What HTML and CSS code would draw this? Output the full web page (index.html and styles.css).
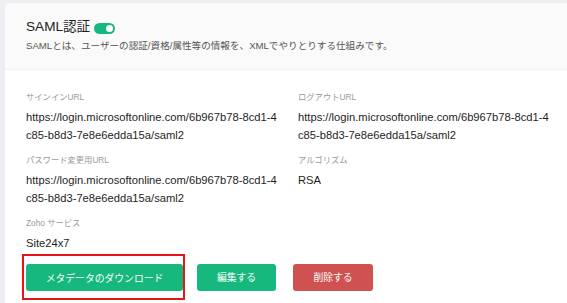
FILE: index.html
```html
<!DOCTYPE html>
<html lang="ja">
<head>
    <meta charset="UTF-8">
    <meta name="viewport" content="width=device-width, initial-scale=1.0">
    <title>SAML認証</title>
    <link rel="stylesheet" href="styles.css">
</head>
<body>

    <div class="card">
        <div class="card-header">
            <div class="title-row">
                <h2 class="title">SAML認証</h2>
                <span class="toggle"><span class="knob"></span></span>
            </div>
            <p class="desc">SAMLとは、ユーザーの認証/資格/属性等の情報を、XMLでやりとりする仕組みです。</p>
        </div>

        <div class="card-body">
            <div class="fields">
                <div class="field">
                    <div class="label">サインインURL</div>
                    <div class="value url">https://login.microsoftonline.com/6b967b78-8cd1-4c85-b8d3-7e8e6edda15a/saml2</div>
                </div>
                <div class="field">
                    <div class="label">ログアウトURL</div>
                    <div class="value url">https://login.microsoftonline.com/6b967b78-8cd1-4c85-b8d3-7e8e6edda15a/saml2</div>
                </div>
                <div class="field">
                    <div class="label">パスワード変更用URL</div>
                    <div class="value url">https://login.microsoftonline.com/6b967b78-8cd1-4c85-b8d3-7e8e6edda15a/saml2</div>
                </div>
                <div class="field">
                    <div class="label">アルゴリズム</div>
                    <div class="value">RSA</div>
                </div>
                <div class="field">
                    <div class="label">Zoho サービス</div>
                    <div class="value">Site24x7</div>
                </div>
            </div>

            <div class="actions">
                <div class="highlight">
                    <button class="btn btn-green btn-wide">メタデータのダウンロード</button>
                </div>
                <button class="btn btn-green btn-edit">編集する</button>
                <button class="btn btn-red">削除する</button>
            </div>
        </div>
    </div>

</body>
</html>
```

FILE: styles.css
```css
body {
    font-family: "Liberation Sans", "Noto Sans CJK JP", sans-serif;
    margin: 0;
    padding: 0;
    background: #eceef2;
    color: #222;
    overflow: hidden;
}

.card {
    margin: 3px 0 0 5px;
    background: white;
    border-radius: 4px 0 0 0;
    height: 300px;
}

/* Header */
.card-header {
    background: #fafafa;
    border-bottom: 1px solid #f2f2f2;
    border-radius: 4px 0 0 0;
    padding: 14px 21px 0;
    height: 52px;
}

.title-row {
    display: flex;
    align-items: center;
    height: 20px;
}

.title {
    margin: 0;
    font-size: 13.6px;
    font-weight: normal;
    line-height: 20px;
    color: #1e1e1e;
}

.toggle {
    width: 21px;
    height: 11px;
    border-radius: 6px;
    background: #17b87d;
    margin-left: 4px;
    margin-top: 3px;
    display: flex;
    justify-content: flex-end;
    align-items: center;
    padding-right: 2px;
    box-sizing: border-box;
}

.knob {
    width: 7px;
    height: 7px;
    border-radius: 50%;
    background: white;
}

.desc {
    margin: 2px 0 0;
    font-size: 9.6px;
    line-height: 14px;
    color: #555;
}

/* Body */
.card-body {
    padding: 21px 21px 0;
}

.fields {
    display: grid;
    grid-template-columns: 256px 256px;
    column-gap: 16px;
    row-gap: 10px;
}

.label {
    font-size: 8.3px;
    line-height: 12px;
    color: #999;
    margin-bottom: 5px;
}

.value {
    font-size: 11.2px;
    line-height: 18px;
    color: #1e1e1e;
}

.url {
    word-break: break-all;
}

/* Buttons */
.actions {
    display: flex;
    align-items: center;
    margin-top: 2px;
    margin-left: -4px;
}

.highlight {
    border: 2px solid #e8141c;
    padding: 8px 0 7px 2px;
}

.btn {
    border: none;
    border-radius: 3px;
    height: 27px;
    color: white;
    font-family: "Liberation Sans", "Noto Sans CJK JP", sans-serif;
    font-size: 9.8px;
    cursor: pointer;
    padding: 0;
}

.btn-green {
    background: #17b87d;
}

.btn-red {
    background: #d05250;
    width: 80px;
    margin-left: 17px;
}

.btn-wide {
    width: 157px;
    display: block;
}

.btn-edit {
    width: 79px;
    margin-left: 12px;
}
```
